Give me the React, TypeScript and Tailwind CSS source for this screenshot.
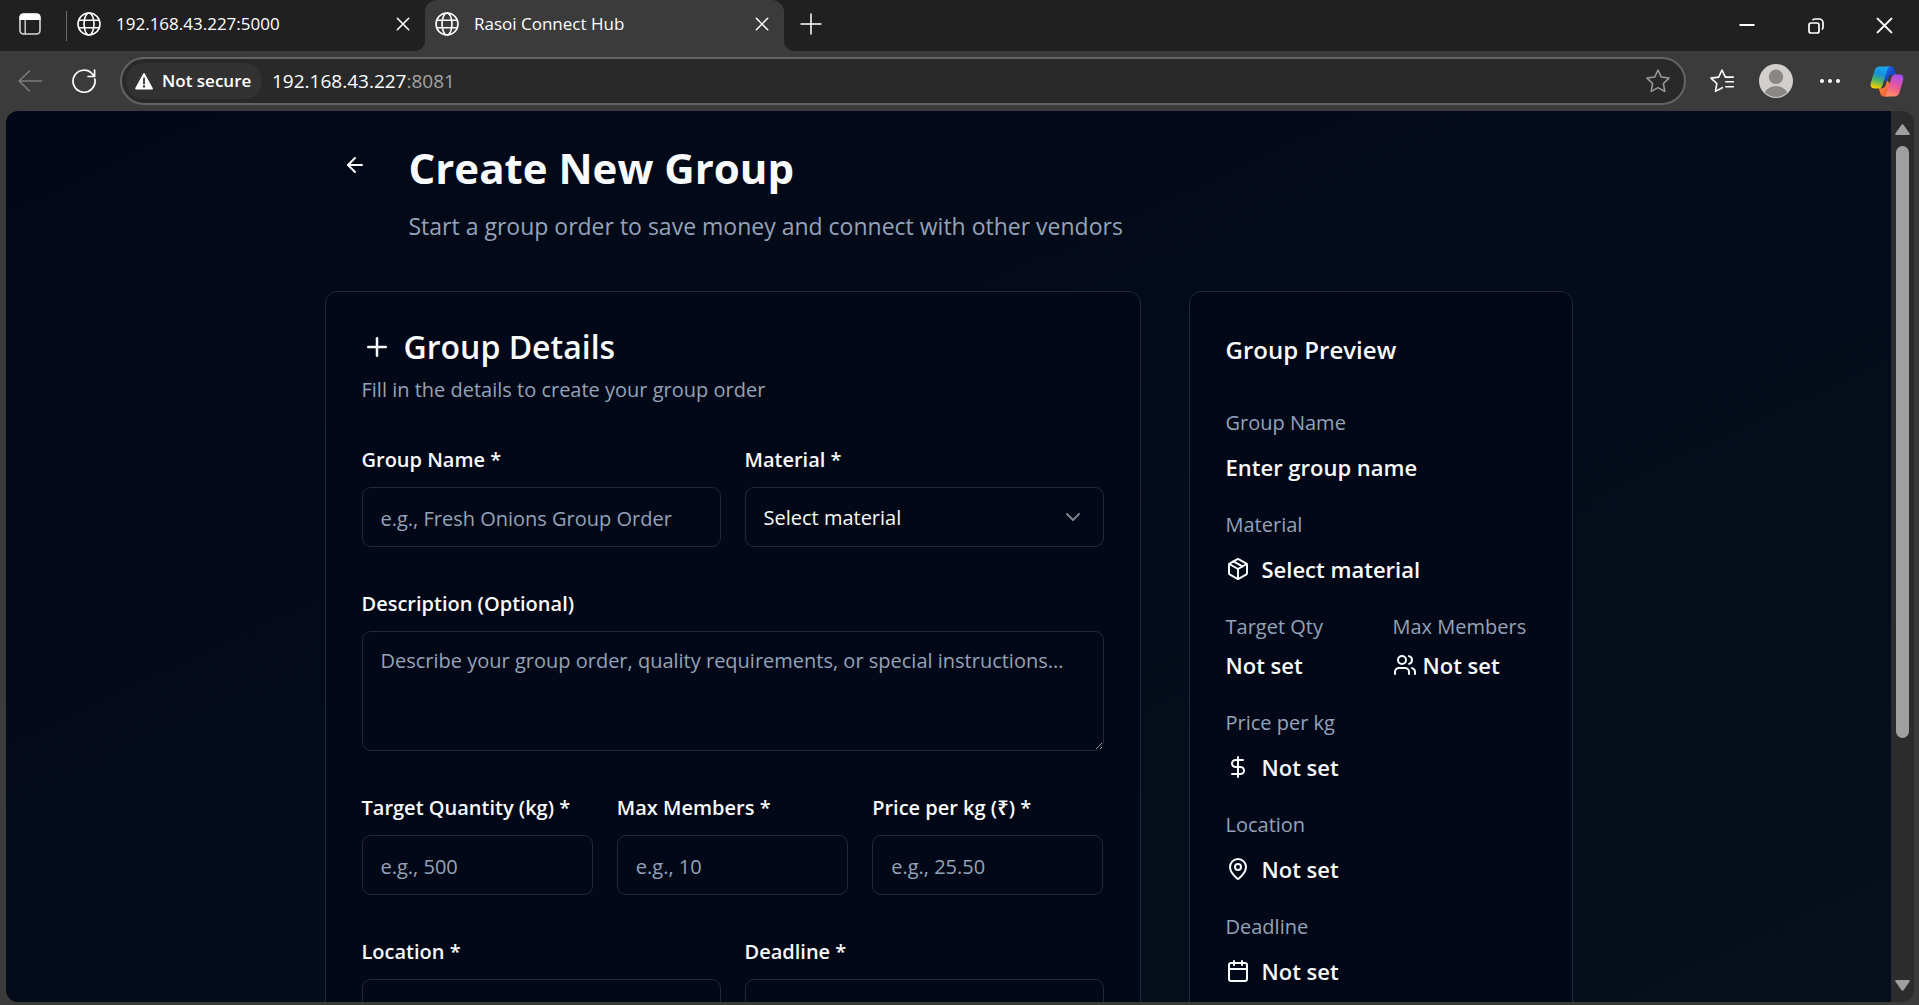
import React from "react";
import { ArrowLeft, Calendar, ChevronDown, DollarSign, MapPin, Package, Plus, Users } from "lucide-react";

function GlobeIcon() {
  return (
    <svg viewBox="0 0 24 24" className="size-6 shrink-0" fill="none" stroke="currentColor" strokeWidth="1.6" aria-hidden="true">
      <circle cx="12" cy="12" r="11" />
      <ellipse cx="12" cy="12" rx="5" ry="11" />
      <path d="M2 8.2h20M2 15.8h20" />
    </svg>
  );
}

function CrossIcon({ size, width }: { size: number; width: number }) {
  return (
    <svg width={size} height={size} viewBox="0 0 16 16" fill="none" stroke="currentColor" strokeWidth={width} strokeLinecap="round" aria-hidden="true">
      <path d="M1.5 1.5l13 13M14.5 1.5l-13 13" />
    </svg>
  );
}

function BrowserTab({ title, active = false }: { title: string; active?: boolean }) {
  return (
    <div
      className={
        active
          ? "relative flex h-full w-[359px] items-center rounded-t-[12px] bg-[#3b3b3b] pr-[10px] pb-[3px] pl-[10px]"
          : "flex h-full w-[357px] items-center pr-[10px] pb-[3px] pl-[9px]"
      }
    >
      {active && (
        <>
          <span className="absolute bottom-0 -left-[10px] size-[10px] bg-[#3b3b3b]">
            <span className="block size-full rounded-br-[10px] bg-[#202020]" />
          </span>
          <span className="absolute -right-[10px] bottom-0 size-[10px] bg-[#3b3b3b]">
            <span className="block size-full rounded-bl-[10px] bg-[#202020]" />
          </span>
        </>
      )}
      <button type="button" role="tab" aria-selected={active} className="flex min-w-0 flex-1 items-center gap-[15px] text-left">
        <GlobeIcon />
        <span className="truncate text-[17px] leading-6">{title}</span>
      </button>
      <button type="button" aria-label={`Close ${title}`} className="flex size-6 items-center justify-center">
        <CrossIcon size={14} width={1.8} />
      </button>
    </div>
  );
}

function TabStrip() {
  return (
    <div className="flex h-[51px] shrink-0 items-center bg-[#202020]">
      <button type="button" aria-label="Tab actions" className="flex h-full w-[60px] items-center justify-center pb-[3px]">
        <svg width="22" height="22" viewBox="0 0 22 22" fill="none" aria-hidden="true">
          <rect x="1" y="1" width="20" height="20" rx="3.5" stroke="#d6d6d6" strokeWidth="1.6" />
          <path d="M0.5 7V4.5a4 4 0 0 1 4-4h13a4 4 0 0 1 4 4V7z" fill="#fff" />
          <path d="M6.2 7v14" stroke="#d6d6d6" strokeWidth="1.4" />
        </svg>
      </button>
      <span className="mr-px ml-[6px] h-[30px] w-px bg-[#6a6a6a]" />
      <div role="tablist" className="flex h-full">
        <BrowserTab title="192.168.43.227:5000" />
        <BrowserTab title="Rasoi Connect Hub" active />
      </div>
      <button type="button" aria-label="New tab" className="ml-[11px] flex h-full w-8 items-center justify-center pb-[3px]">
        <svg width="22" height="22" viewBox="0 0 22 22" stroke="currentColor" strokeWidth="1.5" aria-hidden="true">
          <path d="M11 .5v21M.5 11h21" />
        </svg>
      </button>
      <div className="ml-auto flex h-full">
        <button type="button" aria-label="Minimize" className="flex h-full w-[69px] items-center justify-center">
          <svg width="16" height="16" viewBox="0 0 16 16" stroke="currentColor" strokeWidth="2" aria-hidden="true">
            <path d="M.5 7h15" />
          </svg>
        </button>
        <button type="button" aria-label="Restore" className="flex h-full w-[69px] items-center justify-center">
          <svg width="16" height="16" viewBox="0 0 16 16" fill="none" stroke="currentColor" strokeWidth="1.7" aria-hidden="true">
            <rect x="1" y="5" width="10" height="10" rx="2" />
            <path d="M4.5 2.2C5 1.4 5.8 1 6.8 1H11a4 4 0 0 1 4 4v4.2c0 1-.4 1.8-1.2 2.3" />
          </svg>
        </button>
        <button type="button" aria-label="Close window" className="flex h-full w-[69px] items-center justify-center">
          <CrossIcon size={17} width={1.9} />
        </button>
      </div>
    </div>
  );
}

function CopilotIcon() {
  return (
    <svg width="34" height="31" viewBox="0 0 34 31" aria-hidden="true">
      <defs>
        <linearGradient id="cpLeft" x1="0.6" y1="0" x2="0.35" y2="1">
          <stop offset="0" stopColor="#1aa7ee" />
          <stop offset="0.35" stopColor="#1590dd" />
          <stop offset="0.65" stopColor="#4fb36a" />
          <stop offset="1" stopColor="#f5d000" />
        </linearGradient>
        <linearGradient id="cpTop" x1="0" y1="0" x2="1" y2="1">
          <stop offset="0" stopColor="#1b7fe8" />
          <stop offset="0.6" stopColor="#1746c9" />
          <stop offset="1" stopColor="#2c7df0" />
        </linearGradient>
        <linearGradient id="cpRight" x1="0.7" y1="0" x2="0.35" y2="1">
          <stop offset="0" stopColor="#a44df0" />
          <stop offset="0.5" stopColor="#e8559c" />
          <stop offset="1" stopColor="#ff8f62" />
        </linearGradient>
        <linearGradient id="cpBottom" x1="0" y1="0" x2="1" y2="1">
          <stop offset="0" stopColor="#ff9a3c" />
          <stop offset="1" stopColor="#ee4a3a" />
        </linearGradient>
      </defs>
      <path d="M16 .5h5c2 0 3 1.200 3.600 3l1.600 5.200h-4c-2 0-3.200 1-3.800 3l-1.600 4.800-5-6z" fill="url(#cpTop)" />
      <path d="M18 30.500h-4c-2 0-3-1.200-3.600-3L8.800 22.300h3c2 0 3.200-1 3.800-3l1.600-4.800 5 6z" fill="url(#cpBottom)" />
      <path d="M10 .5h10.500c-1.800.3-2.700 1.700-3.300 3.600l-4.600 14.800c-.7 2.300-2 3.600-4.300 3.600H4.500C1.500 22.500 0 20.300.8 17.300L4.200 5.500C5 2.300 6.800.5 10 .5z" fill="url(#cpLeft)" />
      <path d="M24 30.500H13.500c1.800-.3 2.700-1.700 3.300-3.600l4.600-14.800c.7-2.300 2-3.600 4.300-3.600h3.800c3 0 4.500 2.200 3.700 5.200l-3.400 11.800c-.8 3.200-2.600 5-5.800 5z" fill="url(#cpRight)" />
    </svg>
  );
}

function Toolbar() {
  return (
    <div className="flex h-[60px] shrink-0 items-center bg-[#3b3b3b] pr-[2px] pl-[3px]">
      <button type="button" aria-label="Back" disabled className="flex h-full w-[54px] items-center justify-center text-[#7d7d7d]">
        <svg width="24" height="22" viewBox="0 0 24 22" fill="none" stroke="currentColor" strokeWidth="1.5" strokeLinecap="round" strokeLinejoin="round" aria-hidden="true">
          <path d="M11.500 1L1 11l10.500 10M1 11h22.500" />
        </svg>
      </button>
      <button type="button" aria-label="Refresh" className="flex h-full w-[54px] items-center justify-center">
        <svg width="24" height="24" viewBox="0 0 24 24" fill="none" stroke="currentColor" strokeWidth="1.7" strokeLinecap="round" strokeLinejoin="round" aria-hidden="true">
          <path d="M22.800 10A11 11 0 1 1 20.500 5.200L22.500 7.300M22.600 1v6.500h-6.500" />
        </svg>
      </button>
      <div className="ml-[9px] flex h-12 min-w-0 flex-1 items-center rounded-full border-2 border-[#636363] bg-[#292929] pr-[14px] pl-1">
        <button type="button" className="flex h-9 w-[136px] shrink-0 items-center gap-[9px] rounded-full bg-[#323232] pl-[9px]">
          <svg width="18" height="17" viewBox="0 0 18 17" aria-hidden="true">
            <path d="M9 1.200L16.800 15.600H1.200z" fill="#fff" stroke="#fff" strokeWidth="2" strokeLinejoin="round" />
            <path d="M9 5.500v5" stroke="#323232" strokeWidth="1.800" strokeLinecap="round" />
            <circle cx="9" cy="13.400" r="1.200" fill="#323232" />
          </svg>
          <span className="text-[17px] leading-6 font-semibold whitespace-nowrap">Not secure</span>
        </button>
        <div role="textbox" aria-label="Address" tabIndex={0} className="ml-[10px] min-w-0 flex-1 truncate text-[19px] leading-7">
          192.168.43.227<span className="text-[#a3a3a3]">:8081</span>
        </div>
        <button type="button" aria-label="Add to favorites" className="text-[#9b9b9b]">
          <svg width="24" height="24" viewBox="0 0 24 24" fill="none" stroke="currentColor" strokeWidth="1.500" strokeLinejoin="round" aria-hidden="true">
            <path d="M12 1l3.300 7.100 7.700 1-5.600 5.400 1.400 7.900-6.800-3.700-6.800 3.700 1.400-7.900L1 9.100l7.700-1z" />
          </svg>
        </button>
      </div>
      <button type="button" aria-label="Favorites" className="ml-[9px] flex h-full w-[54px] items-center justify-center">
        <svg width="24" height="24" viewBox="0 0 24 24" fill="none" stroke="currentColor" strokeWidth="1.600" strokeLinecap="round" strokeLinejoin="round" aria-hidden="true">
          <path d="M12.300 18.700l-6.800 3.700 1.300-7.900L1 9.100l7.700-1L12 1l3.300 7.100h8M15.800 12.800h7.500M15.800 17.800h7.500" />
        </svg>
      </button>
      <button type="button" aria-label="Profile" className="flex h-full w-[54px] items-center justify-center">
        <svg width="34" height="34" viewBox="0 0 34 34" aria-hidden="true">
          <clipPath id="avatarClip">
            <circle cx="17" cy="17" r="16" />
          </clipPath>
          <circle cx="17" cy="17" r="17" fill="#d2d0ce" />
          <circle cx="17" cy="12.800" r="7.200" fill="#8a8785" />
          <ellipse cx="17" cy="32" rx="12" ry="10" fill="#8a8785" clipPath="url(#avatarClip)" />
        </svg>
      </button>
      <button type="button" aria-label="Settings and more" className="flex h-full w-[54px] items-center justify-center">
        <svg width="20" height="4" viewBox="0 0 20 4" fill="currentColor" aria-hidden="true">
          <circle cx="2" cy="2" r="2" />
          <circle cx="10" cy="2" r="2" />
          <circle cx="18" cy="2" r="2" />
        </svg>
      </button>
      <button type="button" aria-label="Copilot" className="flex h-full w-[60px] items-center justify-center">
        <CopilotIcon />
      </button>
    </div>
  );
}

const control =
  "block h-[60px] w-full rounded-[9px] border border-[#1e293b] bg-[#020817] px-[18px] pt-[2px] text-[20px] text-[#f8fafc] placeholder:text-[#94a3b8] outline-none";

function Field({ id, label, children }: { id: string; label: string; children: React.ReactNode }) {
  return (
    <div className="flex min-w-0 flex-col gap-[6px]">
      <label htmlFor={id} className="text-[20px] leading-[42px] font-semibold whitespace-nowrap">
        {label}
      </label>
      {children}
    </div>
  );
}

function DetailsCard() {
  return (
    <section className="col-span-2 rounded-[12px] border border-[#1e293b] bg-[#020817] px-9 pt-[37px] pb-9">
      <header className="mb-[34px]">
        <h2 className="flex items-center gap-3 text-[32px] leading-9 font-semibold">
          <Plus size={30} strokeWidth={2} />
          Group Details
        </h2>
        <p className="mt-[10px] text-[20px] leading-[30px] text-[#94a3b8]">Fill in the details to create your group order</p>
      </header>
      <form className="flex flex-col gap-9">
        <div className="grid grid-cols-2 gap-6">
          <Field id="name" label="Group Name *">
            <input id="name" type="text" placeholder="e.g., Fresh Onions Group Order" className={control} />
          </Field>
          <Field id="material" label="Material *">
            <div className="relative">
              <select id="material" className={`${control} appearance-none`} defaultValue="">
                <option value="">Select material</option>
              </select>
              <ChevronDown size={24} className="pointer-events-none absolute top-[18px] right-[19px] opacity-50" />
            </div>
          </Field>
        </div>
        <Field id="description" label="Description (Optional)">
          <textarea
            id="description"
            placeholder="Describe your group order, quality requirements, or special instructions..."
            className="block h-[120px] w-full resize-y rounded-[9px] border border-[#1e293b] bg-[#020817] px-[18px] py-[14px] text-[20px] leading-[30px] outline-none placeholder:text-[#94a3b8]"
          />
        </Field>
        <div className="grid grid-cols-3 gap-6">
          <Field id="quantity" label="Target Quantity (kg) *">
            <input id="quantity" type="text" inputMode="numeric" placeholder="e.g., 500" className={control} />
          </Field>
          <Field id="members" label="Max Members *">
            <input id="members" type="text" inputMode="numeric" placeholder="e.g., 10" className={control} />
          </Field>
          <Field id="price" label="Price per kg (₹) *">
            <input id="price" type="text" inputMode="decimal" placeholder="e.g., 25.50" className={control} />
          </Field>
        </div>
        <div className="grid grid-cols-2 gap-6">
          <Field id="location" label="Location *">
            <input id="location" type="text" className={control} />
          </Field>
          <Field id="deadline" label="Deadline *">
            <input id="deadline" type="text" className={control} />
          </Field>
        </div>
      </form>
    </section>
  );
}

function PreviewItem({ label, icon, children }: { label: string; icon?: React.ReactNode; children: React.ReactNode }) {
  return (
    <div>
      <dt className="text-[20px] leading-8 text-[#94a3b8]">{label}</dt>
      <dd className="mt-[10px] flex items-center gap-3 text-[22px] leading-9 font-semibold">
        {icon}
        {children}
      </dd>
    </div>
  );
}

function PreviewCard() {
  return (
    <aside className="rounded-[12px] border border-[#1e293b] bg-[#020817] px-9 pt-[37px] pb-9">
      <h2 className="text-[24px] leading-[42px] font-semibold">Group Preview</h2>
      <dl className="mt-9 flex flex-col gap-6">
        <PreviewItem label="Group Name">Enter group name</PreviewItem>
        <PreviewItem label="Material" icon={<Package size={24} />}>
          Select material
        </PreviewItem>
        <div className="grid grid-cols-2 gap-6">
          <div>
            <dt className="text-[20px] leading-8 text-[#94a3b8]">Target Qty</dt>
            <dd className="mt-1 text-[22px] leading-9 font-semibold">Not set</dd>
          </div>
          <div>
            <dt className="text-[20px] leading-8 whitespace-nowrap text-[#94a3b8]">Max Members</dt>
            <dd className="mt-1 flex items-center gap-[6px] text-[22px] leading-9 font-semibold">
              <Users size={24} />
              Not set
            </dd>
          </div>
        </div>
        <PreviewItem label="Price per kg" icon={<DollarSign size={24} />}>
          Not set
        </PreviewItem>
        <PreviewItem label="Location" icon={<MapPin size={24} />}>
          Not set
        </PreviewItem>
        <PreviewItem label="Deadline" icon={<Calendar size={24} />}>
          Not set
        </PreviewItem>
      </dl>
    </aside>
  );
}

function Scrollbar() {
  return (
    <div className="flex w-[23px] shrink-0 flex-col items-center bg-[#2c2c2c] pt-[13px] pb-[11px] text-[#9f9f9f]" aria-hidden="true">
      <svg width="15" height="11" viewBox="0 0 15 11" fill="currentColor" stroke="currentColor" strokeWidth="2" strokeLinejoin="round">
        <path d="M7.500 1.200L13.800 10H1.200z" />
      </svg>
      <div className="mt-[11px] flex w-[13px] flex-1 flex-col">
        <div className="h-[71%] rounded-full bg-[#9f9f9f]" />
      </div>
      <svg width="15" height="11" viewBox="0 0 15 11" fill="currentColor" stroke="currentColor" strokeWidth="2" strokeLinejoin="round">
        <path d="M7.500 9.800L1.200 1h12.600z" />
      </svg>
    </div>
  );
}

export default function App() {
  return (
    <div className="flex h-screen flex-col overflow-hidden bg-[#3b3b3b] font-['Open_Sans','Noto_Sans',sans-serif] text-white">
      <TabStrip />
      <Toolbar />
      <div className="mr-[5px] mb-[3px] ml-[6px] flex min-h-0 flex-1 overflow-hidden rounded-[12px]">
        <main className="min-w-0 flex-1 overflow-hidden bg-linear-to-br from-[#020817] to-[#070e1c] text-[#f8fafc]">
          <div className="mx-auto max-w-[1344px] px-12 pt-[30px]">
            <div className="mb-[46px] flex items-start gap-6">
              <button type="button" aria-label="Go back" className="flex h-12 w-[60px] items-center justify-center">
                <ArrowLeft size={24} />
              </button>
              <div>
                <h1 className="text-[42px] leading-[54px] font-bold">Create New Group</h1>
                <p className="mt-3 text-[23px] leading-[38px] text-[#94a3b8]">
                  Start a group order to save money and connect with other vendors
                </p>
              </div>
            </div>
            <div className="grid grid-cols-3 items-start gap-12">
              <DetailsCard />
              <PreviewCard />
            </div>
          </div>
        </main>
        <Scrollbar />
      </div>
    </div>
  );
}
